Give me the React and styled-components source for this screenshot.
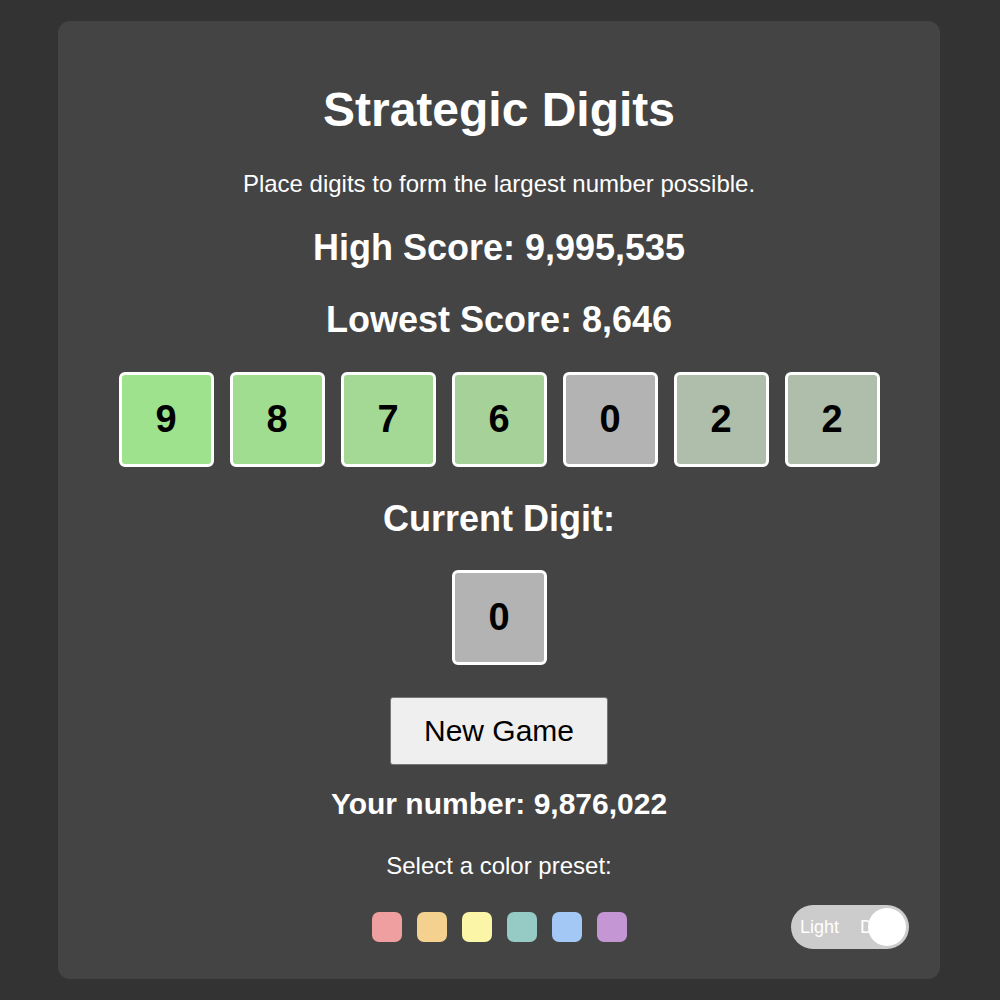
import React from 'react'
import styled, { createGlobalStyle } from 'styled-components'

const GlobalStyle = createGlobalStyle`
  html, body {
    margin: 0;
    padding: 0;
    background-color: #333333;
    font-family: "Liberation Sans", Arial, sans-serif;
  }
`

const Page = styled.div`
  padding: 21px 0 22px;
`

const Card = styled.div`
  position: relative;
  width: 882px;
  margin: 0 60px 0 58px;
  padding: 61px 0 37px;
  box-sizing: border-box;
  background-color: #444444;
  border-radius: 12px;
  display: flex;
  flex-direction: column;
  align-items: center;
  color: #ffffff;
`

const Title = styled.h1`
  margin: 0;
  font-size: 48px;
  line-height: 56px;
  font-weight: bold;
`

const Subtitle = styled.p`
  margin: 32px 0 0;
  font-size: 24px;
  line-height: 28px;
`

const Heading = styled.h2`
  margin: ${p => p.$top}px 0 0;
  font-size: 36px;
  line-height: 42px;
  font-weight: bold;
`

const TileRow = styled.div`
  display: flex;
  gap: 16px;
  margin-top: ${p => p.$top}px;
`

const mix = (d) => {
  const t = d / 9
  const c = (a, b) => Math.round(a + (b - a) * t)
  return `rgb(${c(179, 159)}, ${c(179, 226)}, ${c(179, 141)})`
}

const Tile = styled.div`
  width: 95px;
  height: 95px;
  box-sizing: border-box;
  border: 3px solid #ffffff;
  border-radius: 6px;
  background-color: ${p => mix(p.$digit)};
  color: #000000;
  display: flex;
  align-items: center;
  justify-content: center;
  font-size: 38px;
  font-weight: bold;
`

const Button = styled.button`
  margin-top: 32px;
  height: 68px;
  padding: 0 33px;
  font-family: "Liberation Sans", Arial, sans-serif;
  font-size: 30px;
  color: #000000;
  background-color: #efefef;
  border: 1px solid #767676;
  border-radius: 3px;
`

const Result = styled.p`
  margin: 22px 0 0;
  font-size: 30px;
  line-height: 34px;
  font-weight: bold;
`

const Label = styled.p`
  margin: 31px 0 0;
  font-size: 24px;
  line-height: 28px;
`

const Swatches = styled.div`
  display: flex;
  gap: 15px;
  margin-top: 32px;
`

const Swatch = styled.div`
  width: 30px;
  height: 30px;
  border-radius: 7px;
  background-color: ${p => p.$color};
`

const Toggle = styled.div`
  position: absolute;
  right: 31px;
  bottom: 30px;
  width: 118px;
  height: 44px;
  border-radius: 22px;
  background-color: #cccccc;
  display: flex;
  align-items: center;
  overflow: hidden;
  font-size: 18px;
  color: #ffffff;
`

const ToggleText = styled.span`
  margin-left: ${p => p.$left}px;
`

const Knob = styled.div`
  position: absolute;
  top: 3px;
  right: 3px;
  width: 38px;
  height: 38px;
  border-radius: 50%;
  background-color: #ffffff;
`

const digits = [9, 8, 7, 6, 0, 2, 2]
const presets = ['#ef9f9f', '#f5d18f', '#fbf5a8', '#96cac4', '#a3c8f5', '#c497d4']

export default function App() {
  return (
    <React.Fragment>
      <GlobalStyle />
      <Page>
        <Card>
          <Title>Strategic Digits</Title>
          <Subtitle>Place digits to form the largest number possible.</Subtitle>
          <Heading $top={29}>High Score: 9,995,535</Heading>
          <Heading $top={30}>Lowest Score: 8,646</Heading>
          <TileRow $top={31}>
            {digits.map((d, i) => <Tile key={i} $digit={d}>{d}</Tile>)}
          </TileRow>
          <Heading $top={31}>Current Digit:</Heading>
          <TileRow $top={30}>
            <Tile $digit={0}>0</Tile>
          </TileRow>
          <Button>New Game</Button>
          <Result>Your number: 9,876,022</Result>
          <Label>Select a color preset:</Label>
          <Swatches>
            {presets.map(c => <Swatch key={c} $color={c} />)}
          </Swatches>
          <Toggle>
            <ToggleText $left={9}>Light</ToggleText>
            <ToggleText $left={21}>Dark</ToggleText>
            <Knob />
          </Toggle>
        </Card>
      </Page>
    </React.Fragment>
  )
}
